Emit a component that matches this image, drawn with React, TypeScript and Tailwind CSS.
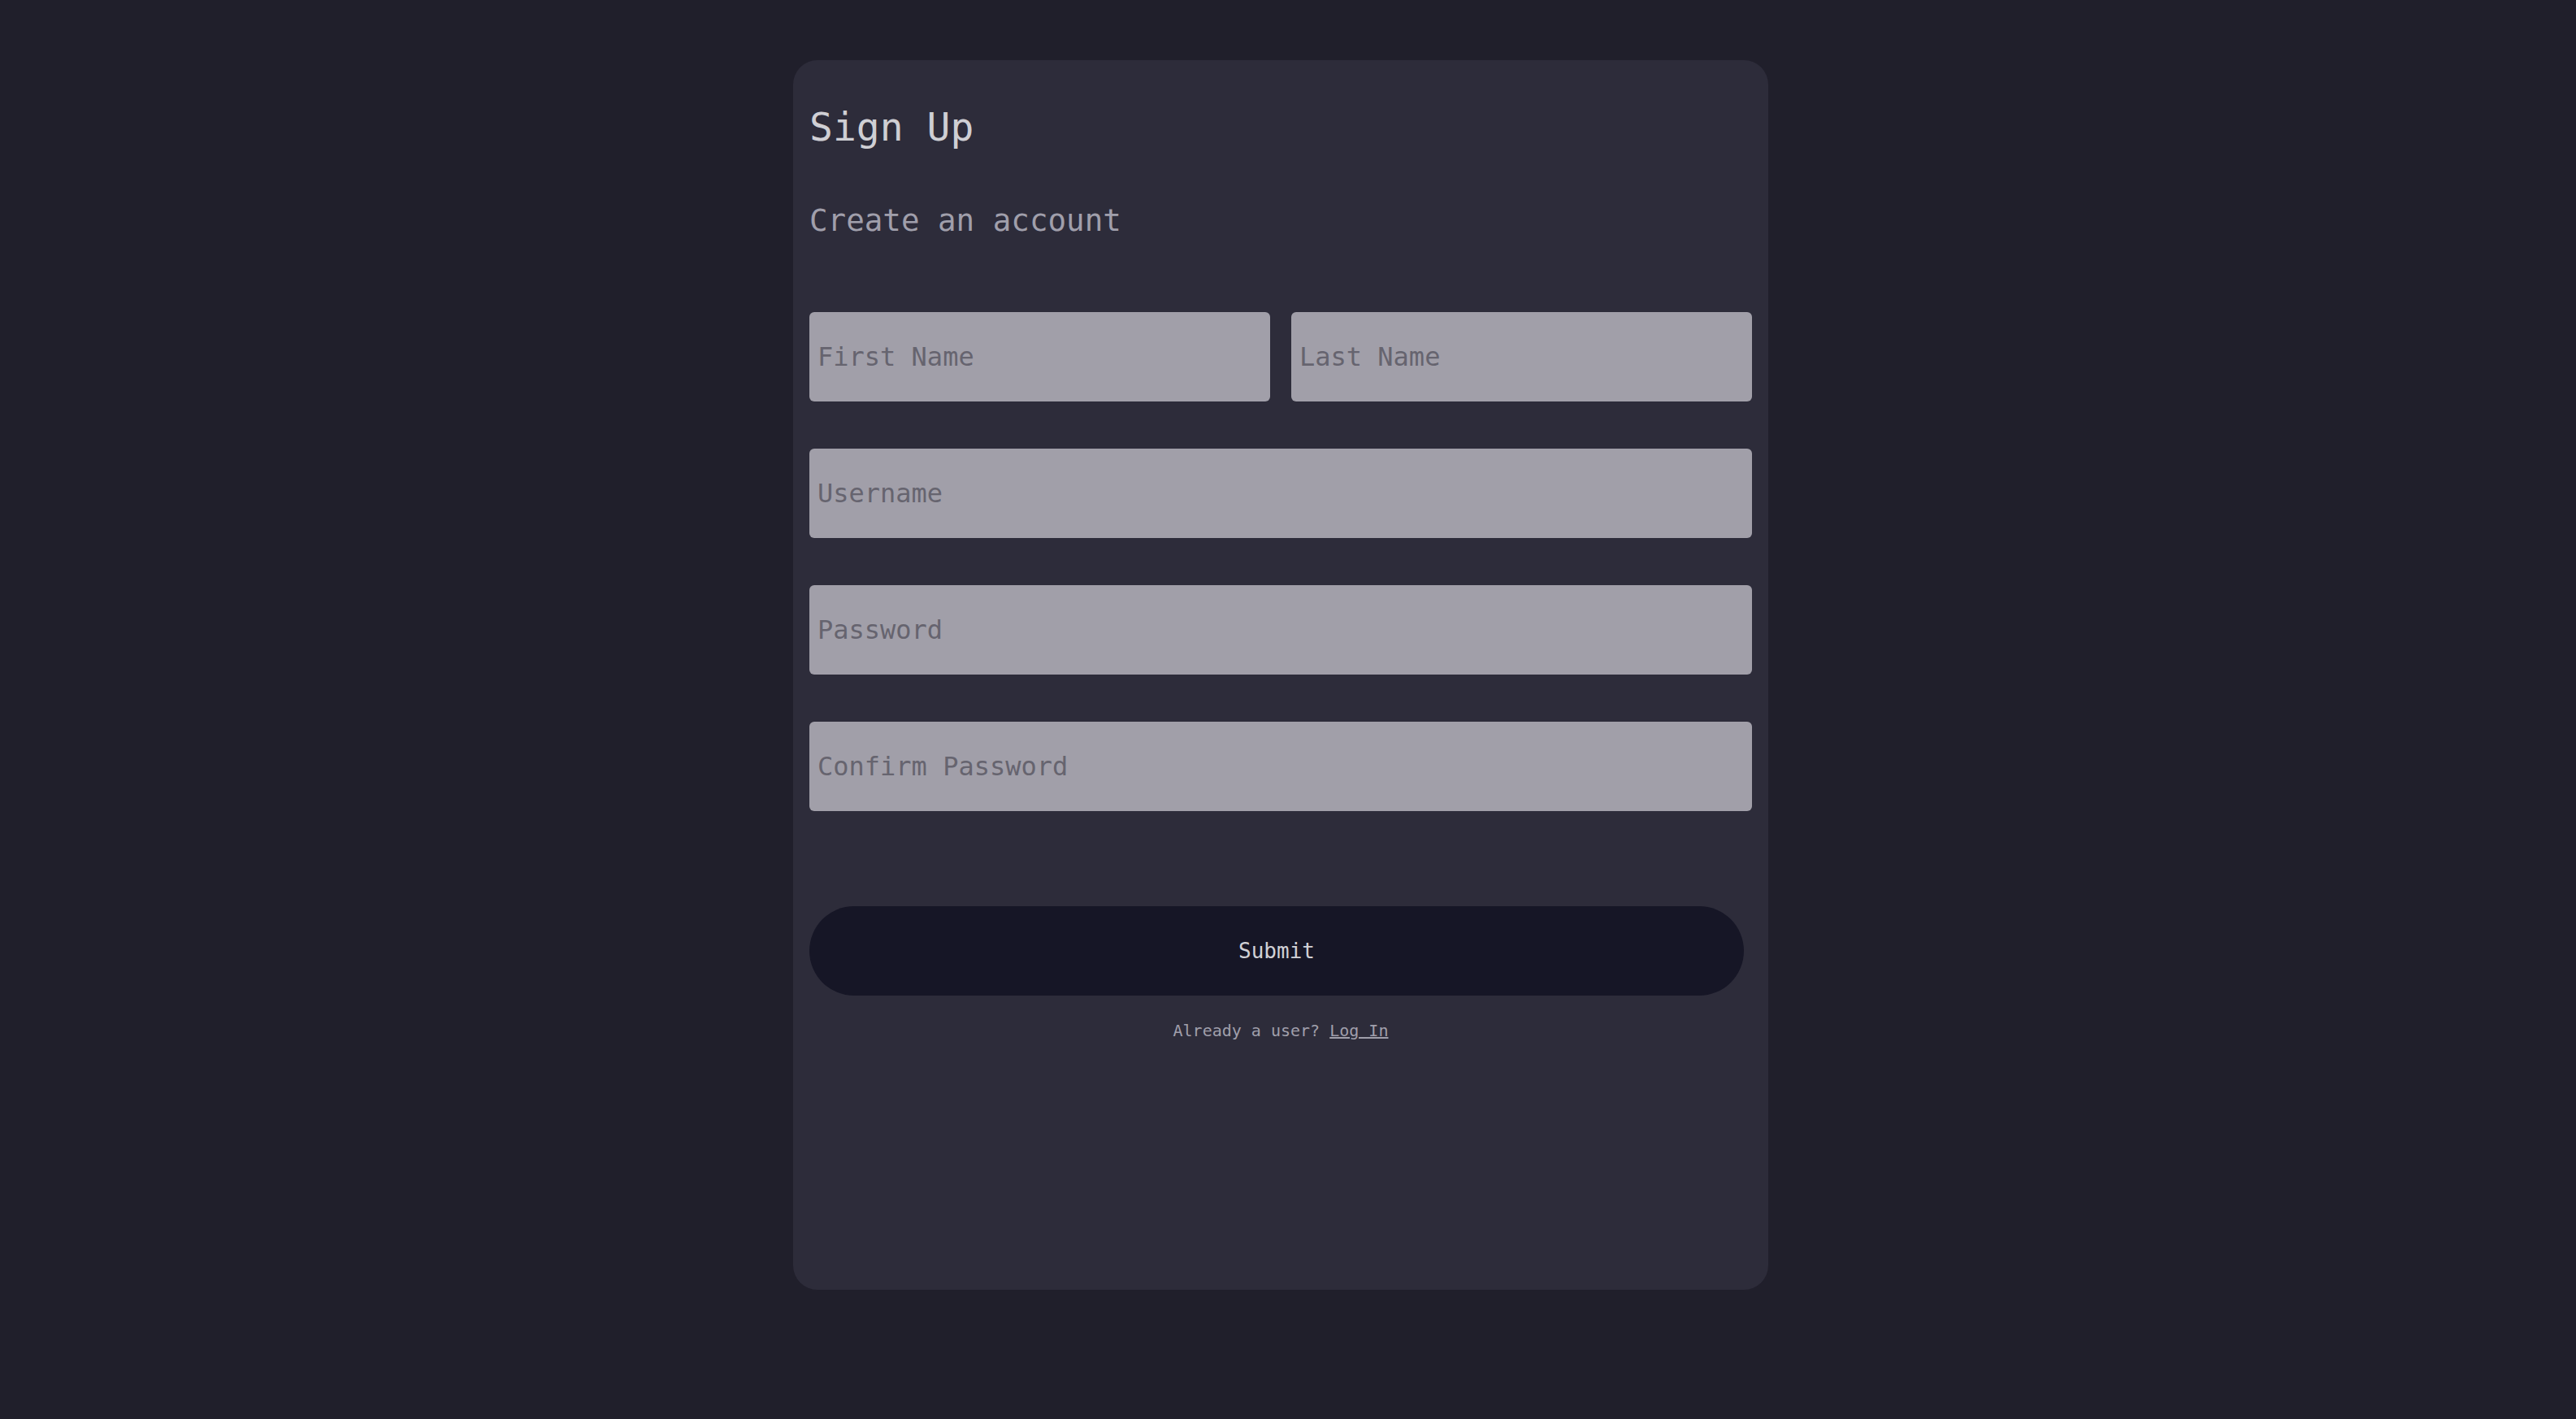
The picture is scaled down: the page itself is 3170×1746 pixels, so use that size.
import { useState } from "react"

const mono = { fontFamily: '"DejaVu Sans Mono", "Liberation Mono", monospace' }

function Field({ placeholder, type = "text" }: { placeholder: string; type?: string }) {
  const [value, setValue] = useState("")
  return (
    <input
      type={type}
      value={value}
      onChange={(e) => setValue(e.target.value)}
      placeholder={placeholder}
      className="h-[110px] w-full rounded-[6px] bg-[#a19fa9] pl-[10px] text-[32px] text-[#2d2c3a] placeholder:text-[#66646f] outline-none"
      style={mono}
    />
  )
}

export default function App() {
  return (
    <div className="min-h-screen w-full bg-[#201f2b] flex justify-center pt-[74px] pr-[18px]" style={mono}>
      <div className="w-[1200px] h-[1513px] rounded-[30px] bg-[#2d2c3a] p-5 flex flex-col">
        {/* Heading */}
        <h1 className="mt-[38px] h-[48px] text-[48px] leading-[48px] text-[#cfcfd4]">Sign Up</h1>
        <h2 className="mt-[73px] h-[36px] text-[37.5px] leading-[36px] text-[#a09fab]">Create an account</h2>

        {/* Form fields */}
        <form className="mt-[95px] flex flex-col" onSubmit={(e) => e.preventDefault()}>
          <div className="flex flex-col gap-[58px]">
            <div className="grid grid-cols-2 gap-[26px]">
              <Field placeholder="First Name" />
              <Field placeholder="Last Name" />
            </div>
            <Field placeholder="Username" />
            <Field placeholder="Password" type="password" />
            <Field placeholder="Confirm Password" type="password" />
          </div>

          <button
            type="submit"
            className="mt-[117px] h-[110px] w-[1150px] rounded-full bg-[#161626] text-[26px] text-[#d1d1d6]"
            style={mono}
          >
            Submit
          </button>
        </form>

        <p className="mt-[33px] text-center text-[20px] leading-[20px] text-[#a09fab]">
          Already a user?{" "}
          <a href="#" className="underline">
            Log In
          </a>
        </p>
      </div>
    </div>
  )
}
